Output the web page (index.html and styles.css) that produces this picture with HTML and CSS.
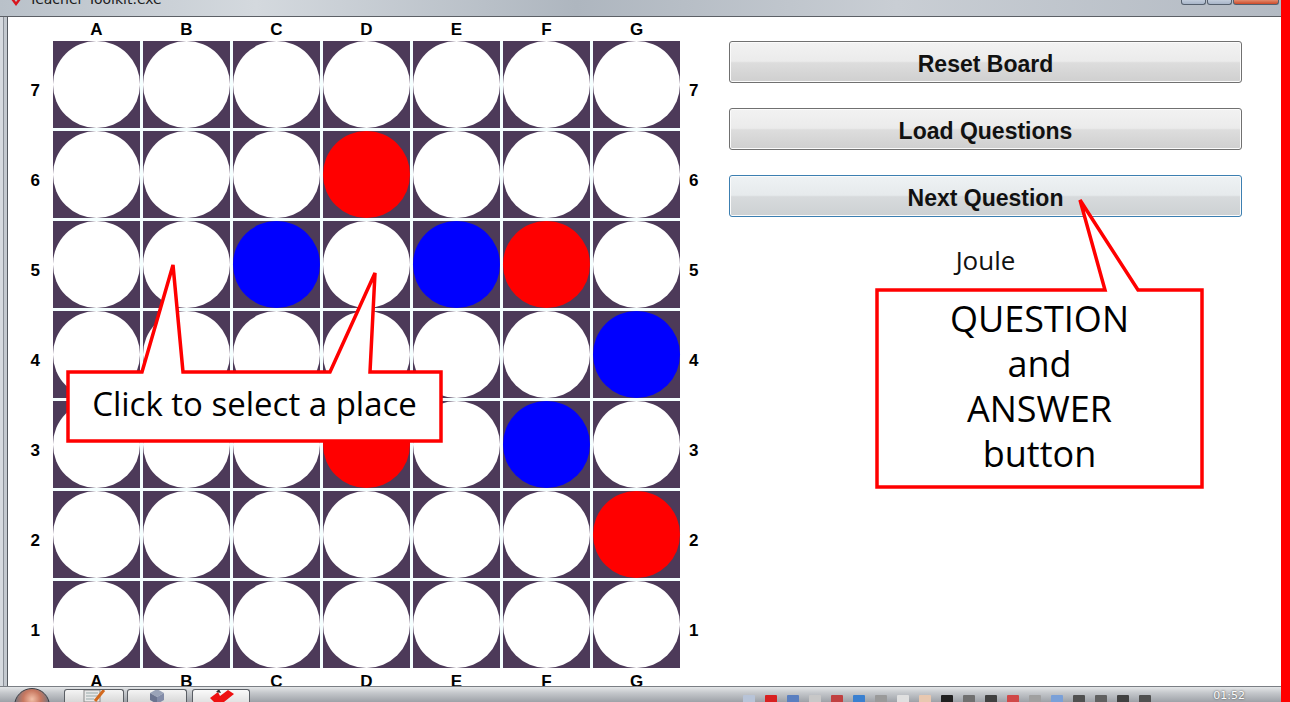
FILE: index.html
```html
<!DOCTYPE html>
<html>
<head>
<meta charset="utf-8">
<title>Teacher Toolkit</title>
<link rel="stylesheet" href="styles.css">
</head>
<body>
<div class="screen">
  <div class="window">
    <div class="titlebar">
      <svg class="app-icon" width="14" height="10" viewBox="0 0 14 10"><path d="M1 0 L7 8 L13 0 L10 0 L7 4 L4 0 Z" fill="#d8141b"/></svg>
      <span class="title">Teacher Toolkit.exe</span>
      <div class="controls"><span class="ctl"></span><span class="ctl"></span><span class="ctl close"></span></div>
    </div>
    <div class="body">
      <div class="frame-left"></div>
      <div class="client">
        <div class="board-area">
          <div></div>
          <div class="col-labels top"><span>A</span><span>B</span><span>C</span><span>D</span><span>E</span><span>F</span><span>G</span></div>
          <div></div>
          <div class="row-labels left"><span>7</span><span>6</span><span>5</span><span>4</span><span>3</span><span>2</span><span>1</span></div>
          <div class="board">
            <div class="cell"><i class="disc"></i></div><div class="cell"><i class="disc"></i></div><div class="cell"><i class="disc"></i></div><div class="cell"><i class="disc"></i></div><div class="cell"><i class="disc"></i></div><div class="cell"><i class="disc"></i></div><div class="cell"><i class="disc"></i></div>
            <div class="cell"><i class="disc"></i></div><div class="cell"><i class="disc"></i></div><div class="cell"><i class="disc"></i></div><div class="cell"><i class="disc red"></i></div><div class="cell"><i class="disc"></i></div><div class="cell"><i class="disc"></i></div><div class="cell"><i class="disc"></i></div>
            <div class="cell"><i class="disc"></i></div><div class="cell"><i class="disc"></i></div><div class="cell"><i class="disc blue"></i></div><div class="cell"><i class="disc"></i></div><div class="cell"><i class="disc blue"></i></div><div class="cell"><i class="disc red"></i></div><div class="cell"><i class="disc"></i></div>
            <div class="cell"><i class="disc"></i></div><div class="cell"><i class="disc"></i></div><div class="cell"><i class="disc"></i></div><div class="cell"><i class="disc"></i></div><div class="cell"><i class="disc"></i></div><div class="cell"><i class="disc"></i></div><div class="cell"><i class="disc blue"></i></div>
            <div class="cell"><i class="disc"></i></div><div class="cell"><i class="disc"></i></div><div class="cell"><i class="disc"></i></div><div class="cell"><i class="disc red"></i></div><div class="cell"><i class="disc"></i></div><div class="cell"><i class="disc blue"></i></div><div class="cell"><i class="disc"></i></div>
            <div class="cell"><i class="disc"></i></div><div class="cell"><i class="disc"></i></div><div class="cell"><i class="disc"></i></div><div class="cell"><i class="disc"></i></div><div class="cell"><i class="disc"></i></div><div class="cell"><i class="disc"></i></div><div class="cell"><i class="disc red"></i></div>
            <div class="cell"><i class="disc"></i></div><div class="cell"><i class="disc"></i></div><div class="cell"><i class="disc"></i></div><div class="cell"><i class="disc"></i></div><div class="cell"><i class="disc"></i></div><div class="cell"><i class="disc"></i></div><div class="cell"><i class="disc"></i></div>
          </div>
          <div class="row-labels right"><span>7</span><span>6</span><span>5</span><span>4</span><span>3</span><span>2</span><span>1</span></div>
          <div></div>
          <div class="col-labels bottom"><span>A</span><span>B</span><span>C</span><span>D</span><span>E</span><span>F</span><span>G</span></div>
          <div></div>
        </div>
        <div class="panel">
          <button class="btn">Reset Board</button>
          <button class="btn">Load Questions</button>
          <button class="btn focused">Next Question</button>
          <div class="answer">Joule</div>
        </div>
      </div>
    </div>
    <div class="taskbar">
      <div class="start-orb"></div>
      <div class="task-btns">
        <div class="task-btn">
          <svg width="26" height="14" viewBox="0 0 26 14"><rect x="3" y="2" width="16" height="12" fill="#e8e8e8" stroke="#888"/><path d="M5 5h12M5 8h12M5 11h8" stroke="#9aa" stroke-width="1"/><path d="M14 13 L23 2" stroke="#d2691e" stroke-width="3"/></svg>
        </div>
        <div class="task-btn">
          <svg width="26" height="14" viewBox="0 0 26 14"><path d="M6 5 L13 1 L20 5 L13 9 Z" fill="#9aa3b8"/><path d="M6 5 L13 9 L13 16 L6 12 Z" fill="#6b7490"/><path d="M20 5 L13 9 L13 16 L20 12 Z" fill="#838ca8"/></svg>
        </div>
        <div class="task-btn active">
          <svg width="30" height="14" viewBox="0 0 30 14"><path d="M4 10 L12 4 L14 8 L22 2 L28 6 L18 14 L8 14 Z" fill="#ee1111"/><path d="M10 4 L13 1 L15 5 Z" fill="#333"/></svg>
        </div>
      </div>
      <div class="tray">
        <span class="ti" style="background:#b8c4d8"></span>
        <span class="ti" style="background:#d82020"></span>
        <span class="ti" style="background:#5a7fc0"></span>
        <span class="ti" style="background:#c8c8c8"></span>
        <span class="ti" style="background:#c04040"></span>
        <span class="ti" style="background:#3a80d0"></span>
        <span class="ti" style="background:#9a9a9a"></span>
        <span class="ti" style="background:#e0e0e0"></span>
        <span class="ti" style="background:#e8c8b0"></span>
        <span class="ti" style="background:#202020"></span>
        <span class="ti" style="background:#707070"></span>
        <span class="ti" style="background:#404040"></span>
        <span class="ti" style="background:#d04848"></span>
        <span class="ti" style="background:#a0a0a0"></span>
        <span class="ti" style="background:#7aa0d8"></span>
        <span class="ti" style="background:#505050"></span>
        <span class="ti" style="background:#606060"></span>
        <span class="ti" style="background:#404040"></span>
        <span class="ti" style="background:#505050"></span>
        <span class="clock">01:52</span>
      </div>
    </div>
  </div>
  <div class="redbar"></div>

  <svg class="callouts" width="1290" height="702" viewBox="0 0 1290 702">
    <polygon points="68,372 142,372 173,265 183,372 330,372 375,273 370,372 441,372 441,441 68,441" fill="#fff" stroke="#f00" stroke-width="3.5" stroke-linejoin="miter"/>
    <polygon points="877,290 1105,290 1080,200 1138,290 1202,290 1202,487 877,487" fill="#fff" stroke="#f00" stroke-width="3.5" stroke-linejoin="miter"/>
  </svg>
  <div class="callout-text c1">Click to select a place</div>
  <div class="callout-text c2">QUESTION<br>and<br>ANSWER<br>button</div>
</div>
</body>
</html>
```

FILE: styles.css
```css
* { box-sizing: border-box; }
html, body { margin: 0; padding: 0; }
body {
  width: 1290px;
  height: 702px;
  overflow: hidden;
  background: #fff;
  font-family: "Liberation Sans", Arial, sans-serif;
}
.screen {
  position: relative;
  width: 1290px;
  height: 702px;
  display: flex;
}
.window {
  flex: 1;
  display: flex;
  flex-direction: column;
  min-width: 0;
}
.redbar {
  width: 9px;
  background: #ff0000;
}

/* title bar */
.titlebar {
  height: 17px;
  flex: none;
  display: flex;
  align-items: flex-start;
  background: linear-gradient(90deg, #b9c1c9 0%, #d4d9de 20%, #aeb6bf 45%, #c9ced4 70%, #b3bac3 100%);
  border-bottom: 1px solid #5c6066;
  overflow: hidden;
  position: relative;
}
.app-icon { margin: -2px 0 0 9px; flex: none; }
.title {
  margin: -9px 0 0 6px;
  font-family: "DejaVu Sans", sans-serif;
  font-size: 14px;
  line-height: 16px;
  color: #1a1a1a;
}
.controls {
  margin-left: auto;
  margin-right: 2px;
  display: flex;
  gap: 1px;
}
.ctl {
  width: 25px;
  height: 6px;
  margin-top: -1px;
  background: linear-gradient(#c8d2e0, #a8b5c8);
  border: 1px solid #55606e;
  border-top: none;
  border-radius: 0 0 3px 3px;
}
.ctl.close { width: 46px; background: linear-gradient(#e99a7c, #cc4a2a); }

.body {
  flex: 1;
  display: flex;
  min-height: 0;
}
.frame-left {
  width: 8px;
  flex: none;
  background: linear-gradient(90deg, #d6dadf 0, #d6dadf 3px, #8a9098 3px, #8a9098 4px, #c4c9cf 4px, #c4c9cf 7px, #555a60 7px);
}
.client {
  flex: 1;
  background: #fff;
  display: flex;
  overflow: hidden;
}

/* board */
.board-area {
  display: grid;
  grid-template-columns: 45px 627px 30px;
  grid-template-rows: 24px 627px 24px;
  flex: none;
}
.col-labels {
  display: grid;
  grid-template-columns: repeat(7, 87px);
  column-gap: 3px;
  font-weight: bold;
  font-size: 17px;
  line-height: 24px;
  text-align: center;
  color: #000;
}
.col-labels.top { padding-top: 1px; }
.col-labels.bottom { padding-top: 2px; }
.row-labels {
  display: grid;
  grid-template-rows: repeat(7, 87px);
  row-gap: 3px;
  font-weight: bold;
  font-size: 17px;
  align-items: center;
  color: #000;
}
.row-labels span { padding-top: 12px; }
.row-labels.left { text-align: right; padding-right: 13px; }
.row-labels.right { text-align: left; padding-left: 9px; }
.board {
  display: grid;
  grid-template-columns: repeat(7, 87px);
  grid-template-rows: repeat(7, 87px);
  gap: 3px;
  background: #f4ffff;
}
.cell {
  background: #4d3a59;
  display: flex;
}
.disc {
  flex: 1;
  border-radius: 50%;
  background: #fff;
}
.disc.red { background: #ff0000; }
.disc.blue { background: #0000ff; }

/* right panel */
.panel {
  margin-left: 19px;
  width: 513px;
  padding-top: 24px;
  display: flex;
  flex-direction: column;
  gap: 25px;
}
.btn {
  height: 42px;
  border: 1px solid #707070;
  border-radius: 3px;
  background: linear-gradient(#f2f2f2 0%, #ebebeb 48%, #dddddd 52%, #cfcfcf 100%);
  font-family: "Liberation Sans", Arial, sans-serif;
  font-weight: bold;
  font-size: 23px;
  color: #111;
  padding: 4px 0 0;
  box-shadow: inset 0 0 0 1px #fbfbfb;
}
.btn.focused {
  border-color: #3c7fb1;
  background: linear-gradient(#eef2f4 0%, #e6eaec 48%, #d7dadc 52%, #cdd1d3 100%);
}
.answer {
  margin-top: 2px;
  text-align: center;
  font-family: "Comic Sans MS", "Open Sans", sans-serif;
  font-size: 26px;
  line-height: 32px;
  color: #111;
}

/* taskbar */
.taskbar {
  height: 16px;
  flex: none;
  display: flex;
  align-items: flex-end;
  background: linear-gradient(#e4e6e8 0%, #c4c7cb 40%, #9ea2a8 100%);
  border-top: 1px solid #7a7e84;
  overflow: hidden;
  position: relative;
}
.start-orb {
  width: 36px;
  height: 36px;
  margin: 0 0 -22px 14px;
  border-radius: 50%;
  background: radial-gradient(circle at 50% 30%, #f2c0a8 0, #c87860 30%, #6e7480 60%, #4a4e58 100%);
  border: 1px solid #3b3f46;
  flex: none;
}
.task-btns {
  display: flex;
  gap: 3px;
  margin-left: 14px;
  align-self: stretch;
}
.task-btn {
  width: 60px;
  margin-top: 2px;
  background: linear-gradient(#f4f4f4, #d8d8d8);
  border: 1px solid #5a5e64;
  border-bottom: none;
  border-radius: 3px 3px 0 0;
  display: flex;
  justify-content: center;
  align-items: flex-end;
  overflow: hidden;
}
.task-btn.active { width: 58px; margin-left: 2px; background: linear-gradient(#fafafa, #e2e2e2); }
.tray {
  margin-left: auto;
  display: flex;
  align-items: flex-end;
  gap: 10px;
  padding-right: 36px;
  height: 100%;
}
.ti {
  width: 12px;
  height: 7px;
  border-radius: 1px 1px 0 0;
}
.clock {
  margin-left: 52px;
  font-family: "DejaVu Sans", sans-serif;
  font-size: 11px;
  line-height: 12px;
  color: #fdfdfd;
  text-shadow: 0 0 2px #333;
}

/* callouts */
.callouts {
  position: absolute;
  left: 0;
  top: 0;
  pointer-events: none;
}
.callout-text {
  position: absolute;
  display: flex;
  align-items: center;
  justify-content: center;
  text-align: center;
  font-family: "Comic Sans MS", "Open Sans", sans-serif;
  color: #000;
}
.callout-text.c1 {
  left: 68px;
  top: 372px;
  width: 373px;
  height: 69px;
  font-size: 33px;
  padding-bottom: 6px;
}
.callout-text.c2 {
  left: 877px;
  top: 290px;
  width: 325px;
  height: 197px;
  font-size: 36px;
  line-height: 45px;
  padding-bottom: 5px;
}
```
